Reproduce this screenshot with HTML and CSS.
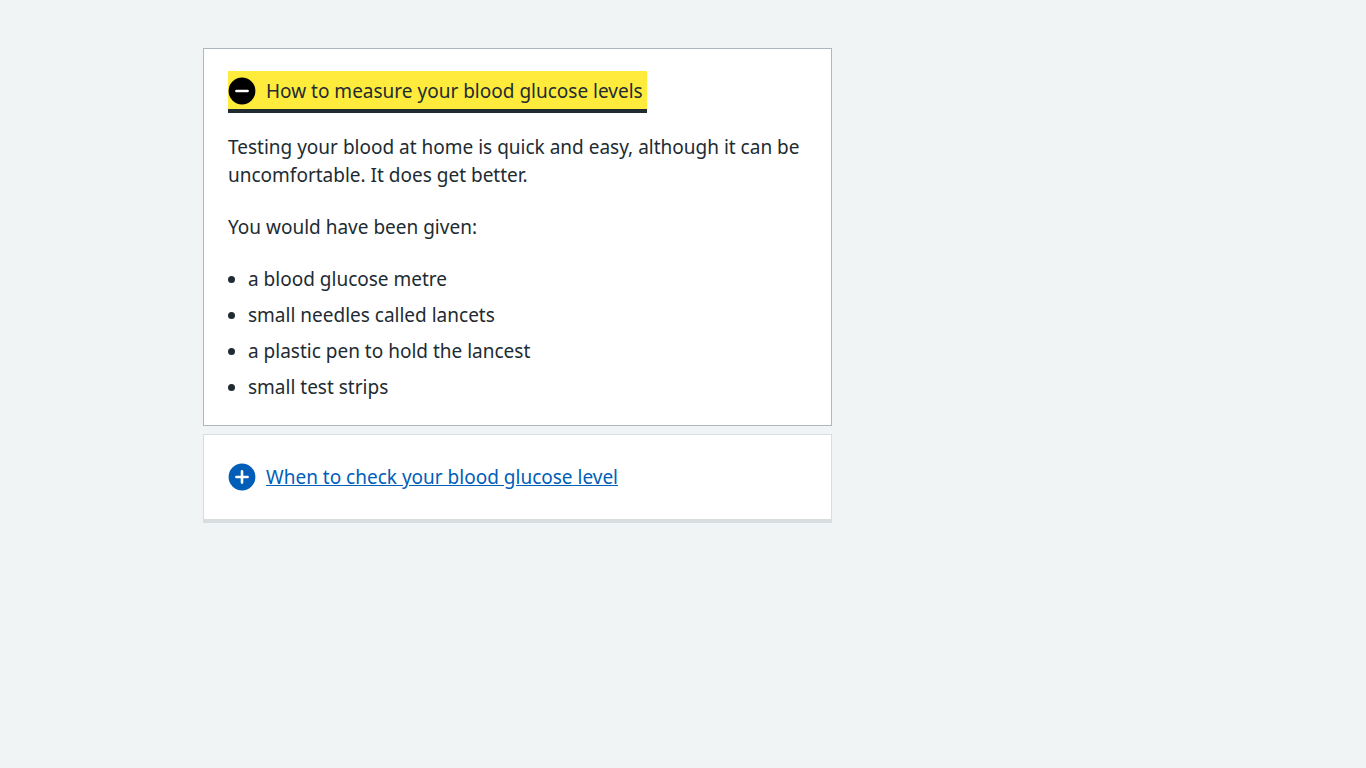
FILE: index.html
```html
<!DOCTYPE html>
<html lang="en">
<head>
<meta charset="utf-8">
<title>Blood glucose</title>
<meta name="viewport" content="width=device-width, initial-scale=1">
<link rel="stylesheet" href="styles.css">
</head>
<body>
<main class="container">
  <div class="column">
    <details class="expander" open>
      <summary class="summary">
        <span class="summary-text summary-text-focus">
          <svg class="icon" viewBox="0 0 28 28" aria-hidden="true"><circle cx="14" cy="14" r="13.4"/><path d="M8.4 14h11.2"/></svg>
          <span class="label">How to measure your blood glucose levels</span>
        </span>
      </summary>
      <div class="content">
        <p>Testing your blood at home is quick and easy, although it can be uncomfortable. It does get better.</p>
        <p>You would have been given:</p>
        <ul>
          <li>a blood glucose metre</li>
          <li>small needles called lancets</li>
          <li>a plastic pen to hold the lancest</li>
          <li>small test strips</li>
        </ul>
      </div>
    </details>
    <details class="expander">
      <summary class="summary">
        <span class="summary-text">
          <svg class="icon" viewBox="0 0 28 28" aria-hidden="true"><circle cx="14" cy="14" r="13.4"/><path d="M8.4 14h11.2M14 8.4v11.2"/></svg>
          <span class="label">When to check your blood glucose level</span>
        </span>
      </summary>
      <div class="content"></div>
    </details>
  </div>
</main>
</body>
</html>
```
FILE: styles.css
```css
* { box-sizing: border-box; }
body {
  margin: 0;
  background: #f0f4f5;
  color: #212b32;
  font: 19px/28px "Noto Sans", "Open Sans", sans-serif;
}
.container {
  max-width: 960px;
  margin: 0 auto;
  padding: 48px 0;
}
.column { width: 65.5%; }
.expander {
  margin-bottom: 8px;
  background: #fff;
  border: 1px solid #d8dde0;
  border-bottom-width: 4px;
}
.expander[open] {
  border-color: #aeb7bd;
  border-bottom-width: 1px;
}
.summary {
  display: block;
  padding: 28px 24px;
  cursor: pointer;
  outline: none;
}
.expander[open] .summary { padding: 22px 24px 0; }
.summary-text {
  display: inline-flex;
  align-items: center;
  gap: 10px;
  vertical-align: top;
  color: #005eb8;
}
.label { text-decoration: underline; }
.summary-text-focus {
  padding: 6px 4px 4px 0;
  background: #ffeb3b;
  border-bottom: 4px solid #212b32;
  color: #212b32;
}
.summary-text-focus .label { text-decoration: none; }
.icon { width: 28px; height: 28px; flex: none; }
.icon circle { fill: #005eb8; }
.icon path {
  fill: none;
  stroke: #fff;
  stroke-width: 2.6;
  stroke-linecap: round;
}
.summary-text-focus .icon circle { fill: #000; }
.content { padding: 20px 24px 24px; }
.content p { margin: 0 0 24px; }
.content ul { margin: 0; padding-left: 20px; }
.content li { margin-bottom: 8px; }
.content li:last-child { margin-bottom: 0; }
```
